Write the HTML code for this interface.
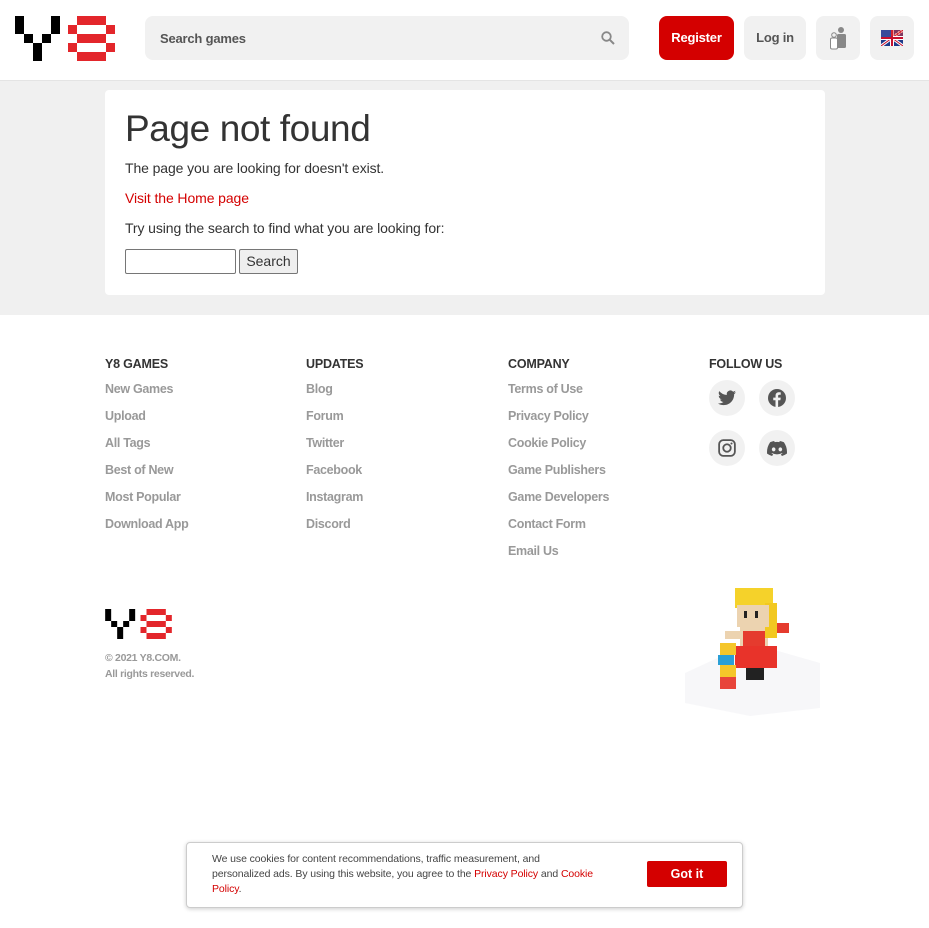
<!DOCTYPE html>
<html><head><meta charset="utf-8"><style>
*{box-sizing:border-box;margin:0;padding:0}
body{width:929px;height:928px;background:#fff;font-family:"Liberation Sans",sans-serif;position:relative;overflow:hidden;color:#333}
.a{position:absolute}
.hdr{left:0;top:0;width:929px;height:81px;border-bottom:1px solid #e4e4e4;background:#fff}
.search{left:145px;top:16px;width:484px;height:44px;background:#f1f1f1;border-radius:8px;font-size:13px;font-weight:bold;color:#555;padding:15px 15px;letter-spacing:-0.2px}
.btn{top:16px;height:44px;border-radius:8px;background:#f1f1f1;font-size:13px;font-weight:bold;text-align:center;line-height:44px;letter-spacing:-0.2px}
.gray{left:0;top:81px;width:929px;height:234px;background:#f0f0f0}
.card{left:105px;top:90px;width:720px;height:205px;background:#fff;border-radius:4px}
h1{position:absolute;left:125px;top:108px;font-size:37px;font-weight:normal;color:#333;letter-spacing:-0.4px}
.p{left:125px;font-size:14px;color:#333;letter-spacing:-0.1px}
.col h4{font-size:12.5px;font-weight:bold;color:#333;margin-bottom:11px;letter-spacing:-0.2px}
.col div{font-size:12.5px;font-weight:bold;color:#999;height:27px;letter-spacing:-0.3px}
.soc{width:36px;height:36px;border-radius:50%;background:#f1f1f1;display:flex;align-items:center;justify-content:center}
.ck{left:186px;top:842px;width:557px;height:66px;border:1px solid #ccc;border-radius:4px;background:#fff;box-shadow:0 1px 4px rgba(0,0,0,.2)}
</style></head><body>
<div class="a hdr"></div>
<svg class="a" style="left:15px;top:16px" width="100" height="45" viewBox="0 0 100 45">
<g fill="#000"><rect x="0" y="0" width="9" height="18"/><rect x="36" y="0" width="9" height="18"/><rect x="9" y="18" width="9" height="9"/><rect x="27" y="18" width="9" height="9"/><rect x="18" y="27" width="9" height="18"/></g>
<g fill="#e3262b"><rect x="62" y="0" width="29" height="9"/><rect x="53" y="9" width="9" height="9"/><rect x="91" y="9" width="9" height="9"/><rect x="62" y="18" width="29" height="9"/><rect x="53" y="27" width="9" height="9"/><rect x="91" y="27" width="9" height="9"/><rect x="62" y="36" width="29" height="9"/></g></svg>
<div class="a search">Search games</div>
<svg class="a" style="left:601px;top:31px" width="14" height="14" viewBox="0 0 14 14"><circle cx="5.5" cy="5.5" r="4.3" fill="none" stroke="#888" stroke-width="1.8"/><line x1="8.8" y1="8.8" x2="13" y2="13" stroke="#888" stroke-width="2"/></svg>
<div class="a btn" style="left:659px;width:75px;background:#d40000;color:#fff">Register</div>
<div class="a btn" style="left:744px;width:62px;color:#555">Log in</div>
<div class="a btn" style="left:816px;width:44px"><svg style="margin-top:10px" width="20" height="24" viewBox="0 0 20 24"><circle cx="13" cy="4" r="3" fill="#888"/><rect x="9" y="8" width="9" height="14" rx="1.5" fill="#888"/><circle cx="6" cy="9" r="2.3" fill="none" stroke="#888"/><rect x="2.5" y="12" width="7" height="11" rx="1.5" fill="#fff" stroke="#888"/></svg></div>
<div class="a btn" style="left:870px;width:44px"><svg style="margin-top:14px" width="22" height="16" viewBox="0 0 22 16"><rect width="22" height="16" fill="#1e3a8a"/><path d="M0 0L22 16M22 0L0 16" stroke="#fff" stroke-width="3"/><path d="M0 0L22 16M22 0L0 16" stroke="#c8102e" stroke-width="1"/><path d="M11 0V16M0 8H22" stroke="#fff" stroke-width="4"/><path d="M11 0V16M0 8H22" stroke="#c8102e" stroke-width="2"/><rect x="0" y="0" width="10" height="7" fill="#3a4a9a"/><path d="M10 1H22M10 3H22M10 5H22" stroke="#d33" stroke-width="1"/></svg></div>
<div class="a gray"></div>
<div class="a card"></div>
<h1>Page not found</h1>
<div class="a p" style="top:160px">The page you are looking for doesn't exist.</div>
<div class="a p" style="top:190px;color:#d40000">Visit the Home page</div>
<div class="a p" style="top:220px">Try using the search to find what you are looking for:</div>
<div class="a" style="left:125px;top:249px;width:111px;height:25px;border:1px solid #767676;border-radius:2px;background:#fff"></div>
<div class="a" style="left:239px;top:249px;width:59px;height:25px;border:1px solid #767676;border-radius:2px;background:#efefef;font-size:14px;text-align:center;line-height:23px;color:#333">Search</div>
<div class="a col" style="left:105px;top:357px"><h4>Y8 GAMES</h4><div>New Games</div><div>Upload</div><div>All Tags</div><div>Best of New</div><div>Most Popular</div><div>Download App</div></div>
<div class="a col" style="left:306px;top:357px"><h4>UPDATES</h4><div>Blog</div><div>Forum</div><div>Twitter</div><div>Facebook</div><div>Instagram</div><div>Discord</div></div>
<div class="a col" style="left:508px;top:357px"><h4>COMPANY</h4><div>Terms of Use</div><div>Privacy Policy</div><div>Cookie Policy</div><div>Game Publishers</div><div>Game Developers</div><div>Contact Form</div><div>Email Us</div></div>
<div class="a col" style="left:709px;top:357px"><h4>FOLLOW US</h4></div>
<div class="a soc" style="left:709px;top:380px"><svg width="18" height="16" viewBox="0 0 24 20"><path fill="#555" d="M24 2.4a10 10 0 0 1-2.8.8A5 5 0 0 0 23.3.4a9.8 9.8 0 0 1-3.1 1.2A4.9 4.9 0 0 0 11.8 6 14 14 0 0 1 1.7.9a4.9 4.9 0 0 0 1.5 6.6 4.9 4.9 0 0 1-2.2-.6 4.9 4.9 0 0 0 3.9 4.9 5 5 0 0 1-2.2.1 4.9 4.9 0 0 0 4.6 3.4A9.9 9.9 0 0 1 0 17.3 14 14 0 0 0 7.5 19.5c9.1 0 14-7.5 14-14v-.6A10 10 0 0 0 24 2.4z"/></svg></div>
<div class="a soc" style="left:759px;top:380px"><svg width="18" height="18" viewBox="0 0 24 24"><circle cx="12" cy="12" r="12" fill="#555"/><path fill="#f1f1f1" d="M13.5 24V15h3l.5-3.5h-3.5V9.3c0-1 .3-1.7 1.8-1.7H17V4.5c-.3 0-1.4-.1-2.6-.1-2.6 0-4.300 1.6-4.300 4.4v2.7H7V15h3v9z"/></svg></div>
<div class="a soc" style="left:709px;top:430px"><svg width="18" height="18" viewBox="0 0 24 24"><rect x="1.5" y="1.5" width="21" height="21" rx="5.5" fill="none" stroke="#555" stroke-width="2.4"/><circle cx="12" cy="12" r="5" fill="none" stroke="#555" stroke-width="2.4"/><circle cx="18" cy="6" r="1.4" fill="#555"/></svg></div>
<div class="a soc" style="left:759px;top:430px"><svg width="20" height="15" viewBox="0 0 24 18"><path fill="#555" d="M20.3 1.5A19.6 19.6 0 0 0 15.4 0l-.6 1.3a18 18 0 0 0-5.6 0L8.6 0a19.6 19.6 0 0 0-4.9 1.5C.6 6.2-.3 10.7.1 15.2A19.8 19.8 0 0 0 6.1 18l1.3-2a12.8 12.8 0 0 1-2-1l.5-.4a14 14 0 0 0 12.2 0l.5.4a12.8 12.8 0 0 1-2 1l1.3 2a19.8 19.8 0 0 0 6-2.800c.5-5.2-.9-9.7-3.6-13.7zM8 12.4c-1.2 0-2.2-1.1-2.2-2.4S6.8 7.6 8 7.6s2.2 1.1 2.2 2.4-1 2.4-2.2 2.4zm8 0c-1.2 0-2.2-1.1-2.2-2.4s1-2.4 2.2-2.4 2.2 1.1 2.2 2.4-1 2.4-2.2 2.4z"/></svg></div>
<svg class="a" style="left:105px;top:609px" width="67" height="30" viewBox="0 0 100 45">
<g fill="#000"><rect x="0" y="0" width="9" height="18"/><rect x="36" y="0" width="9" height="18"/><rect x="9" y="18" width="9" height="9"/><rect x="27" y="18" width="9" height="9"/><rect x="18" y="27" width="9" height="18"/></g>
<g fill="#e3262b"><rect x="62" y="0" width="29" height="9"/><rect x="53" y="9" width="9" height="9"/><rect x="91" y="9" width="9" height="9"/><rect x="62" y="18" width="29" height="9"/><rect x="53" y="27" width="9" height="9"/><rect x="91" y="27" width="9" height="9"/><rect x="62" y="36" width="29" height="9"/></g></svg>
<div class="a" style="left:105px;top:650px;font-size:10.5px;font-weight:bold;color:#999;line-height:16px;letter-spacing:-0.3px">© 2021 Y8.COM.<br>All rights reserved.</div>
<svg class="a" style="left:680px;top:583px" width="145" height="133" viewBox="0 0 145 133">
<path d="M5 90L70 60L140 80L140 125L70 133L5 120Z" fill="#f7f7f9"/>
<rect x="60" y="40" width="28" height="30" fill="#ecd3b0"/>
<rect x="55" y="5" width="38" height="20" fill="#f5d22a"/><rect x="85" y="20" width="12" height="35" fill="#f2c820"/><rect x="97" y="40" width="12" height="10" fill="#e53b2e"/>
<rect x="57" y="22" width="32" height="22" fill="#ecd3b0"/><rect x="64" y="28" width="3" height="7" fill="#222"/><rect x="75" y="28" width="3" height="7" fill="#222"/>
<rect x="45" y="48" width="20" height="8" fill="#ecd3b0"/>
<rect x="63" y="48" width="22" height="20" fill="#e53b2e"/><rect x="55" y="63" width="42" height="22" fill="#e8332a"/>
<rect x="66" y="85" width="18" height="12" fill="#222"/>
<rect x="40" y="60" width="16" height="12" fill="#f5c62a"/><rect x="38" y="72" width="16" height="10" fill="#2a9fd6"/><rect x="40" y="82" width="16" height="12" fill="#f5c62a"/><rect x="40" y="94" width="16" height="12" fill="#e8443a"/>
</svg>
<div class="a ck"></div>
<div class="a" style="left:212px;top:852px;width:410px;font-size:10.5px;line-height:15px;color:#444;letter-spacing:-0.1px">We use cookies for content recommendations, traffic measurement, and<br>personalized ads. By using this website, you agree to the <span style="color:#d40000">Privacy Policy</span> and <span style="color:#d40000">Cookie<br>Policy</span>.</div>
<div class="a" style="left:647px;top:861px;width:80px;height:26px;background:#d40000;border-radius:2px;color:#fff;font-size:12.5px;font-weight:bold;text-align:center;line-height:26px">Got it</div>
</body></html>
